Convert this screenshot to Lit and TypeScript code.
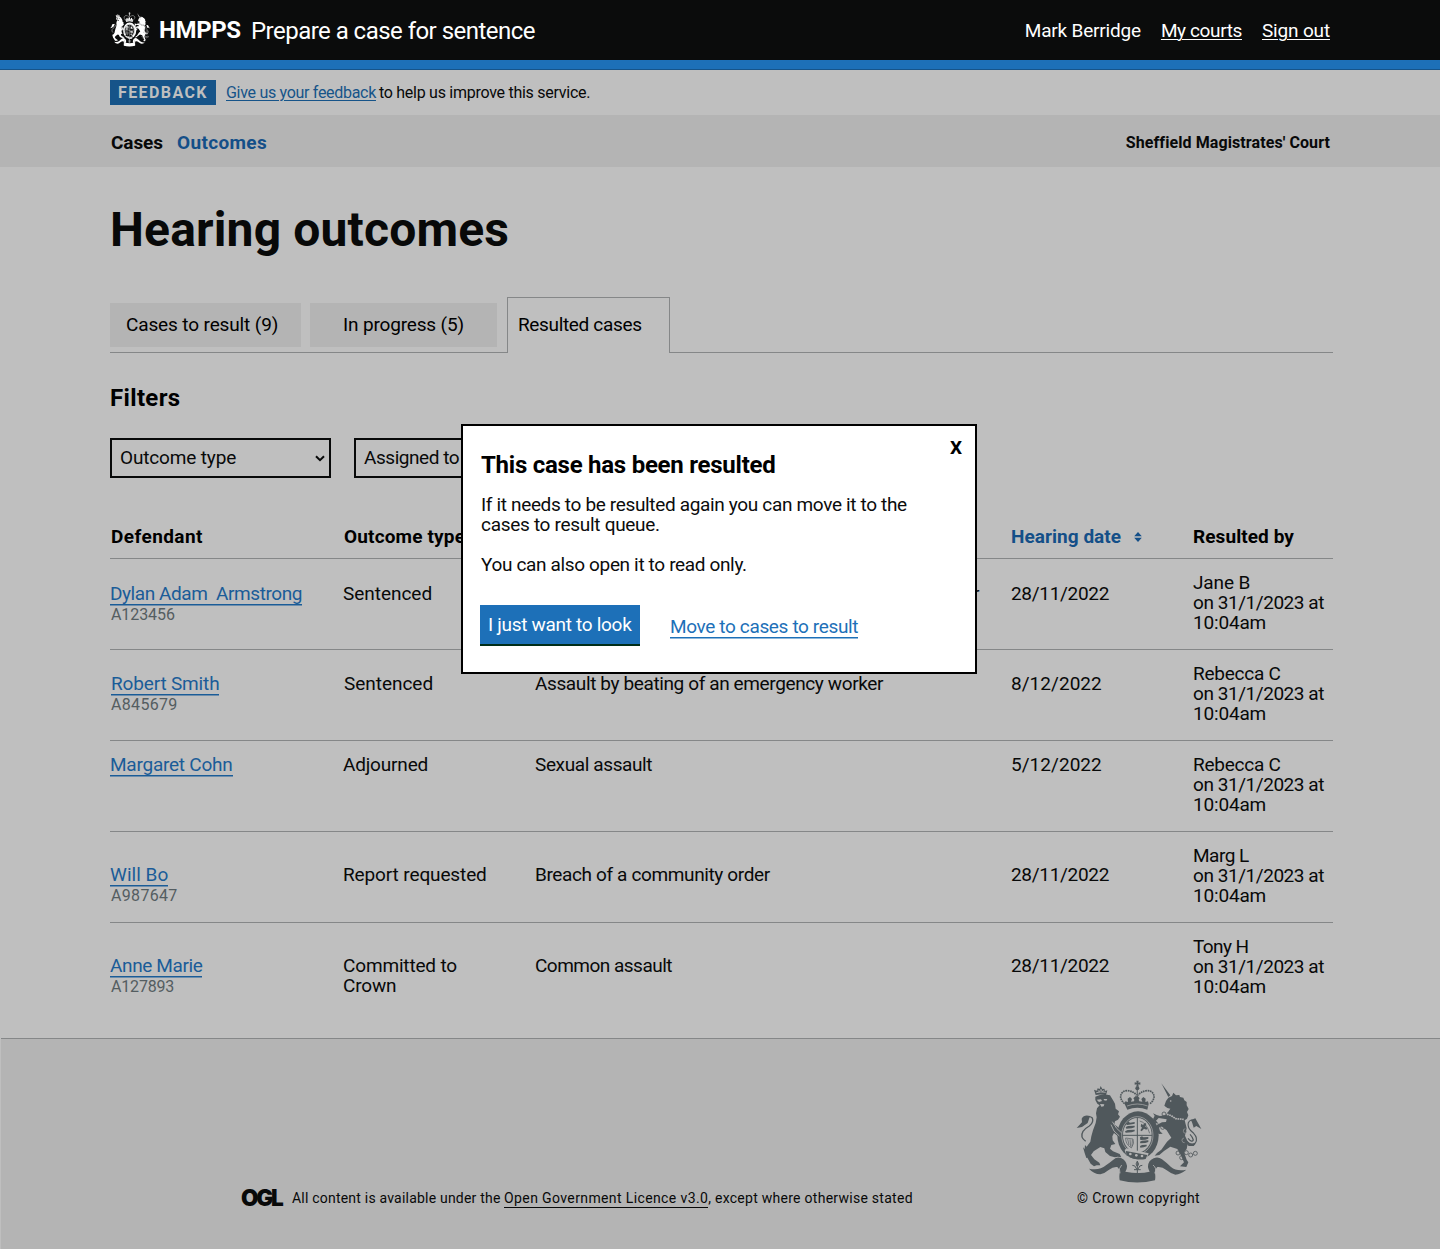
import { LitElement, html, svg, css, unsafeCSS, nothing } from "lit";
import { customElement } from "lit/decorators.js";

/* Optical tracking steps, in hundredths of a pixel: .k-m32 is -0.32px, .k-p12 is +0.12px. */
const steps = [...Array.from({ length: 121 }, (_, i) => i - 60), 140];
const tracking = unsafeCSS(
  steps.map((n) => `.k-${n < 0 ? "m" : "p"}${Math.abs(n)}{letter-spacing:${n / 100}px}`).join("")
);
const k = (n: number, text: string, cls = "") =>
  html`<span class="k-${n < 0 ? "m" : "p"}${Math.abs(n)} ${cls}">${text}</span>`;

@customElement("royal-crest")
export class RoyalCrest extends LitElement {
  static styles = css`
    :host { display: block; }
    svg { display: block; width: 100%; height: 100%; }
    .f { fill: currentColor; }
    .s { fill: none; stroke: currentColor; }
    .g { fill: var(--ground); }
    .gs { fill: none; stroke: var(--ground); }
  `;
  render() {
    const pips = [
      [312, 147], [308, 187], [372, 200], [368, 228], [354, 264], [365, 278], [379, 263], [392, 270], [406, 265],
    ];
    return html`<svg viewBox="48 45 378 312" preserveAspectRatio="none">
      <!-- crown -->
      <path class="f" d="M229 47h7l-1 6 6-1v7l-6-1 1 7h-7l1-7-6 1v-7l6 1z" />
      <circle class="f" cx="232" cy="70" r="6" />
      <path class="s" stroke-width="5" stroke-dasharray="5 2" d="M194 116C172 98 183 76 203 77q18 2 27 14M270 116C292 98 281 76 261 77q-18 2-27 14" />
      <path class="s" stroke-width="4" stroke-dasharray="4 2" d="M232 76v24" />
      <path class="f" d="M194 117l2-8 8 2-1-10 7-5 6 6-3 8 9-1 1-5-3-4 6-6h8l5 6-3 4 2 5 9 1-3-8 6-6 7 5-1 10 8-2 2 8-4 17q-30-12-60 0z" />
      <path class="gs" stroke-width="2" d="M201 123q31-12 62 0" />
      <!-- garter -->
      <ellipse class="f" cx="234" cy="211" rx="62" ry="72" />
      <ellipse class="gs" cx="232" cy="211" rx="47" ry="56" stroke-width="2" />
      <ellipse class="g" cx="232" cy="211" rx="43" ry="52" />
      <path class="s" stroke-width="3" d="M232 159v104M188 211h88" />
      <path class="f" d="M200 174l6-4 4 3 14-2v5l-8 2-14 2-5-3zM197 186l7-3 20-1v5l-9 3-16 1zM195 199l8-4 21-1v5l-9 3-18 1z" />
      <path class="f" d="M240 217l6-3 4 3 15-1v5l-9 3-15 1zM240 230l6-3 19-1v5l-9 3-15 1zM240 243l6-3 14-1v5l-9 3-10 1z" />
      <path class="s" stroke-width="2" d="M197 219l22 3q6 12-5 27-18-12-17-30zM203 222l4 18M210 223l2 22M217 224l-1 20" />
      <path class="s" stroke-width="2" d="M239 168q20 4 30 37" />
      <path class="f" d="M244 176l5 4 6-7 4 4-3 8 7 4-4 5-7-3-7 8-4-3 5-8-4-4z" />
      <path class="g" d="M194 255l6-5 66 15-5 13-60-2z" />
      <path class="f" d="M198 258l64 12-5 12q-32 6-58-11z" />
      <circle class="g" cx="211" cy="267" r="4" /><circle class="g" cx="229" cy="271" r="4" /><circle class="g" cx="246" cy="273" r="4" />
      <!-- lion -->
      <path class="f" d="M107 90l-5-16 8 3 3-7 6 2 3-9 5 9 6-1 3 7 6-2-4 15q-15-4-31-1z" />
      <path class="gs" stroke-width="2.5" d="M109 83q13-4 28-1M113 76l5 4 5-7 4 7 6-4" />
      <path class="f" d="M106 95q22-10 44-4l10 16 5 9 2 15 10 8-3 9 6 7-6 9-9 5-2 9 18 15 2 8-9 13-12-10-5 10 1 12 8 11-12 3-4 11 9 8 20 8 5 10-11-2-8 2-15-4-14-12-3-11-12-4-20 13-8 11 10 13 15 10 3 8-11 0-8 3-10-8-10-18-3 1-5-15-5-17 5 5 1-12 5 5 11-15 3-16 5-18 8-22 3-17-2-12 3-15 8-9-7-5-6-11z" />
      <path class="g" d="M110 104l13-1 3 5-9 3zM131 102l11 0-3 5-7-1zM120 117l13 1-2 6-7 1z" />
      <path class="gs" stroke-width="2.5" d="M157 170l13 20 15 14M153 179l9 19 16 15" />
      <path class="s" stroke-width="4" d="M77 229q-18-13-8-30 8-10 19-16 14-11 9-24-8-8-17-1-9 13-17 22" />
      <path class="f" d="M90 153q-18-5-25 8l1 11-16 17 16-3 17-12z" />
      <!-- unicorn -->
      <path class="f" d="M304 55l27 36-6 5z" />
      <path class="f" d="M313 122L318 108 325 98 336 93 340 83 348 91 358 90 360 96 370 98 373 106 380 111 380 121 386 132 381 141 385 151 381 161 374 166 380 190 375 212 384 232 380 252 372 262 380 284 385 292 379 306 360 304 372 292 361 268 352 252 331 245 312 258 298 270 284 272 291 264 304 254 321 230 334 218 320 196 304 184 297 188 300 199 308 206 296 207 287 192 290 180 306 172 318 171 320 163 296 159 288 167 296 176 286 174 279 163 284 152 279 145 290 150 300 153 318 150 331 131 322 129z" />
      <path class="s" stroke="var(--ground)" stroke-width="2" d="M322 143l13 5 13 9 24 2" />
      <path class="gs" stroke-width="5" stroke-dasharray="5 2" d="M321 148l13 4 13 9 24 2" />
      <circle class="g" cx="332" cy="108" r="2.5" />
      <path class="s" stroke-width="3.5" d="M378 228q16 15 28 6 9-14-5-29-21-16-16-32 6-12 18-5M384 220q12 14 16 5-2-9-10-17" />
      <path class="f" d="M393 165l13-5 8 14 10 18-15-9-8 5-4-13zM379 225l12 12 16-1-6 7-15 0-8-10z" />
      ${pips.map(([x, y]) => svg`<circle class="s" cx=${x} cy=${y} r="6" stroke-width="2.5" />`)}
      <path class="gs" stroke-width="1.5" d="M376 191a7 7 0 1 0 2 14M372 219a7 7 0 1 0 2 14" />
      <!-- motto ribbon -->
      <path class="f" d="M87 311q14 16 34 17 12-2 25-13 14-11 26-9 8 6 7 18-2 12 0 22 52 13 106 0 2-10 0-22-1-12 7-18 14-2 27 9 14 11 27 14 16-1 33-15-29 6-46-8-16-15-27-23-12-9-25-3-18 8-17 27 1 7 5 13-32 8-73 0 6-10 5-18-3-16-18-23-13-4-23 5-14 11-22 17-20 17-51 10z" />
      <path class="gs" stroke-width="2.5" d="M180 325q-6-15 5-25M284 325q8-15-5-25" />
      <path class="g" d="M214 300h36l-2 20q-16 4-32 0z" />
      <path class="s" stroke-width="3" d="M232 288v38M222 314h20M217 301q8-2 13 11M247 301q-8-2-13 11M232 289q-7 8-1 15M232 289q7 8 1 15" />
    </svg>`;
  }
}

interface Row {
  name: [string, number];
  id?: [string, number];
  outcome: [string, number];
  offence: [string, number];
  date: [string, number];
  by: [string, number];
  cls: string;
}

const rows: Row[] = [
  { name: ["Dylan Adam\u00a0 Armstrong", -42], id: ["A123456", -8], outcome: ["Sentenced", -3], offence: ["Assault by beating of an emergency worker", -38], date: ["28/11/2022", -31], by: ["Jane B", -12], cls: "r1" },
  { name: ["Robert Smith", -16], id: ["A845679", 32], outcome: ["Sentenced", -3], offence: ["Assault by beating of an emergency worker", -38], date: ["8/12/2022", 4], by: ["Rebecca C", -24], cls: "r2" },
  { name: ["Margaret Cohn", -24], outcome: ["Adjourned", -18], offence: ["Sexual assault", -38], date: ["5/12/2022", 4], by: ["Rebecca C", -24], cls: "r3" },
  { name: ["Will Bo", 2], id: ["A987647", 32], outcome: ["Report requested", -12], offence: ["Breach of a community order", -37], date: ["28/11/2022", -31], by: ["Marg L", -50], cls: "r4" },
  { name: ["Anne Marie", -38], id: ["A127893", -18], outcome: ["Committed to Crown", -16], offence: ["Common assault", -51], date: ["28/11/2022", -31], by: ["Tony H", -60], cls: "r4" },
];

@customElement("app-root")
export class AppRoot extends LitElement {
  static styles = [
    tracking,
    css`
      :host {
        display: block;
        position: relative;
        width: 1440px;
        height: 1249px;
        overflow: hidden;
        background: #bfbfbf;
        color: #080909;
        font: 400 19px/20px Roboto, "Liberation Sans", sans-serif;
      }
      * { box-sizing: border-box; }
      span { white-space: nowrap; }
      h1, h2, p { margin: 0; }
      a { color: inherit; text-decoration: none; }
      .top {
        display: flex; align-items: flex-start; height: 69px; padding: 0 110px;
        background: #0b0c0c; color: #fff; border-bottom: 9px solid #1d70b8;
      }
      .logo { width: 40px; height: 35px; margin-top: 12px; --ground: #0b0c0c; }
      .org { margin: 15px 0 0 9px; font: 700 24px/30px Roboto, sans-serif; width: 92px; }
      .service { margin-top: 16px; font-size: 24px; line-height: 30px; }
      .user { margin: 21px 0 0 auto; display: flex; gap: 20px; }
      .user a { text-decoration: underline; text-decoration-thickness: 1px; text-underline-offset: 2px; }
      .phase {
        display: flex; height: 46px; padding: 10px 110px 0; font-size: 16px; line-height: 26px;
        border-top: 1px solid #16548a;
      }
      .tag {
        width: 106px; height: 25px; padding-left: 8px; margin-right: 10px;
        background: #165489; color: #bfbfbf; font-weight: 700; line-height: 26px;
      }
      .phase a { color: #165489; text-decoration: underline; text-decoration-thickness: 1px; text-underline-offset: 2px; margin-right: 3px; }
      .nav {
        display: flex; align-items: center; height: 52px; padding: 3px 110px 0 111px;
        background: #b4b4b4; font-weight: 700; gap: 14px;
      }
      .nav .cur { color: #144f88; }
      .court { margin-left: auto; font-size: 16px; }
      .main { padding: 0 107px 0 110px; height: 871px; }
      h1 { padding-top: 35px; height: 130px; font-size: 48px; line-height: 56px; }
      .tabs { display: flex; height: 56px; border-bottom: 1px solid #858788; }
      .tab { height: 44px; margin-top: 6px; background: #b4b4b4; line-height: 44px; color: #000; }
      .t1 { width: 191px; padding-left: 16px; margin-right: 9px; }
      .t2 { width: 187px; padding-left: 33px; margin-right: 10px; }
      .t3 { width: 163px; height: 56px; margin: 0; padding: 5px 0 0 10px; background: #bfbfbf; border: 1px solid #858788; border-bottom: 0; }
      h2 { font-size: 24px; line-height: 30px; color: #000; }
      .filters { padding: 30px 0 0; height: 85px; }
      .selects { display: flex; gap: 23px; }
      .select {
        display: flex; align-items: center; justify-content: space-between;
        width: 221px; height: 40px; padding: 0 4px 0 8px; border: 2px solid #080909;
      }
      .select svg { width: 10px; height: 7px; }
      .grid { display: grid; grid-template-columns: 233px 192px 476px 182px 140px; }
      .head { height: 81px; padding-top: 49px; border-bottom: 1px solid #858788; font-weight: 700; color: #000; }
      .head > :first-child, .head > :nth-child(2) { padding-left: 1px; }
      .head .sort { color: #144f88; display: flex; gap: 13px; align-items: center; height: 20px; }
      .sort svg { width: 8px; height: 10px; }
      .row { height: 91px; border-bottom: 1px solid #858788; }
      .row:last-child { border-bottom: 0; }
      .row > div { padding-top: var(--drop); }
      .row > .by { padding-top: 14px; }
      .r1 { --drop: 25px; } .r2 { --drop: 24px; } .r3 { --drop: 14px; } .r4 { --drop: 33px; }
      .r1 .off { padding-right: 32px; text-align: right; }
      .r2 .name, .r2 .out { margin-left: 1px; }
      .wrap { display: block; width: 150px; white-space: normal; }
      .name { display: inline-block; height: 21px; border-bottom: 1px solid #1a5c98; color: #1a5c98; box-shadow: 0 0.5px #1a5c98; }
      .id { display: block; margin: 0 0 0 1px; font-size: 16px; line-height: 20px; color: #545d61; }
      .foot {
        display: flex; height: 211px; margin-left: 1px; padding-left: 240px;
        background: #b4b4b4; border-top: 1px solid #858788; font-size: 14px;
      }
      .ogl { width: 51px; padding-top: 149px; font: 900 22.5px/20px Inter, sans-serif; letter-spacing: -2.2px; }
      .licence { padding-top: 149px; width: 785px; }
      .licence a { border-bottom: 1px solid #080909; padding-bottom: 1px; }
      .crown { padding-top: 41px; }
      .crown royal-crest { width: 126px; height: 104px; margin: 0 0 4px -1px; color: #50585c; --ground: #b4b4b4; }
      .modal {
        position: absolute; left: 461px; top: 424px; width: 516px; height: 250px;
        padding: 24px 18px; background: #fff; border: 2px solid #000; color: #0b0c0c;
      }
      .modal h2 { margin-bottom: 15px; }
      .modal p { margin-bottom: 20px; }
      .close { position: absolute; right: 13px; top: 12px; font-weight: 700; color: #000; }
      .actions { display: flex; margin: 30px 0 0 -1px; }
      .btn { width: 160px; height: 41px; padding-left: 8px; background: #1d70b8; color: #fff; line-height: 40px; border-bottom: 2px solid #002d18; margin-right: 30px; }
      .move { height: 21px; margin-top: 12px; color: #1d70b8; border-bottom: 1px solid #1d70b8; box-shadow: 0 0.5px #1d70b8; }
    `,
  ];

  private select(label: unknown) {
    return html`<div class="select">${label}<svg viewBox="0 0 10 7"><path d="M1 1.2 5 5.2 9 1.2" fill="none" stroke="#080909" stroke-width="2" /></svg></div>`;
  }

  private row(r: Row) {
    return html`<div class="grid row ${r.cls}">
      <div><a class="name">${k(r.name[1], r.name[0])}</a>${r.id ? html`<span class="id">${k(r.id[1], r.id[0])}</span>` : nothing}</div>
      <div class="out">${k(r.outcome[1], r.outcome[0], "wrap")}</div>
      <div class="off">${k(r.offence[1], r.offence[0])}</div>
      <div>${k(r.date[1], r.date[0])}</div>
      <div class="by">${k(r.by[1], r.by[0])}<br />${k(-45, "on 31/1/2023 at")}<br />${k(-18, "10:04am")}</div>
    </div>`;
  }

  render() {
    return html`
      <header class="top">
        <royal-crest class="logo"></royal-crest>
        <div class="org">${k(-40, "HMPPS")}</div>
        <div class="service">${k(-53, "Prepare a case for sentence")}</div>
        <div class="user">${k(-19, "Mark Berridge")}<a>${k(-38, "My courts")}</a><a>${k(-16, "Sign out")}</a></div>
      </header>
      <div class="phase"><div class="tag">${k(140, "FEEDBACK")}</div><a>${k(-30, "Give us your feedback")}</a>${k(-27, "to help us improve this service.")}</div>
      <nav class="nav"><a>${k(-8, "Cases")}</a><a class="cur">${k(34, "Outcomes")}</a><div class="court">${k(9, "Sheffield Magistrates' Court")}</div></nav>
      <main class="main">
        <h1>${k(16, "Hearing outcomes")}</h1>
        <div class="tabs">
          <div class="tab t1">${k(-13, "Cases to result (9)")}</div>
          <div class="tab t2">${k(-16, "In progress (5)")}</div>
          <div class="tab t3">${k(-34, "Resulted cases")}</div>
        </div>
        <div class="filters"><h2>${k(34, "Filters")}</h2></div>
        <div class="selects">${this.select(k(-15, "Outcome type"))}${this.select(k(-45, "Assigned to"))}</div>
        <div class="grid head">
          <div>${k(42, "Defendant")}</div><div>${k(16, "Outcome type")}</div><div>Offence</div>
          <div class="sort">${k(4, "Hearing date")}<svg viewBox="0 0 8 10"><path d="M4 0 7.8 4.2H.2zM4 10 .2 5.8h7.6z" fill="#144f88" /></svg></div>
          <div>${k(8, "Resulted by")}</div>
        </div>
        <div>${rows.map((r) => this.row(r))}</div>
      </main>
      <footer class="foot">
        <div class="ogl"><span>OGL</span></div>
        <div class="licence">${k(21, "All content is available under the")} <a>${k(38, "Open Government Licence v3.0")}</a>${k(27, ", except where otherwise stated")}</div>
        <div class="crown"><royal-crest></royal-crest>${k(42, "© Crown copyright")}</div>
      </footer>
      <section class="modal" role="dialog">
        <span class="close">X</span>
        <h2>${k(-25, "This case has been resulted")}</h2>
        <p>${k(-34, "If it needs to be resulted again you can move it to the")}<br />${k(-30, "cases to result queue.")}</p>
        <p>${k(-35, "You can also open it to read only.")}</p>
        <div class="actions"><div class="btn">${k(-30, "I just want to look")}</div><a class="move">${k(-36, "Move to cases to result")}</a></div>
      </section>
    `;
  }
}
